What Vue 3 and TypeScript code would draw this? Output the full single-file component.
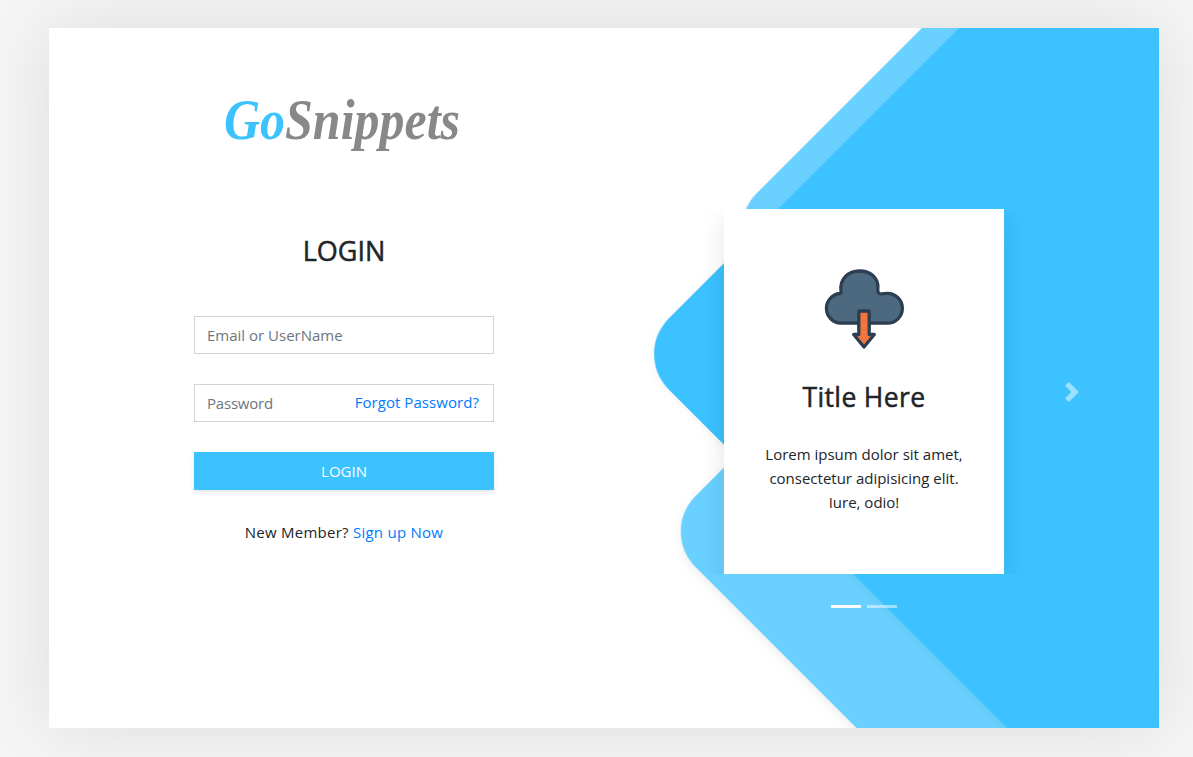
<script setup lang="ts">
import { ref } from 'vue'

const email = ref('')
const password = ref('')
const activeSlide = ref(0)
const slides = [0, 1]
</script>

<template>
  <main class="page">
    <section class="panel">
      <svg class="shapes" viewBox="0 0 1110 700" aria-hidden="true">
        <g class="shape light" transform="translate(672 201) rotate(-45)">
          <rect width="700" height="700" rx="50" />
        </g>
        <g class="shape light" transform="translate(611 503.5) rotate(-45)">
          <rect width="700" height="700" rx="50" />
        </g>
        <g class="shape dark" transform="translate(584.3 326) rotate(-45)">
          <rect width="900" height="900" rx="50" />
        </g>
      </svg>

      <div class="login">
        <svg class="logo" width="250" height="70" viewBox="0 0 250 70" role="img" aria-label="GoSnippets">
          <text x="4" y="49" textLength="236" lengthAdjust="spacingAndGlyphs"><tspan class="go">Go</tspan><tspan class="snippets">Snippets</tspan></text>
        </svg>
        <h3 class="heading">LOGIN</h3>
        <form class="form" @submit.prevent>
          <input v-model="email" class="field" type="text" placeholder="Email or UserName" />
          <div class="password">
            <input v-model="password" class="field" type="password" placeholder="Password" />
            <a class="link forgot">Forgot Password?</a>
          </div>
          <button class="submit" type="submit">LOGIN</button>
        </form>
        <p class="signup">New Member? <a class="link">Sign up Now</a></p>
      </div>

      <div class="carousel">
        <div class="clip">
          <article class="card">
            <svg class="cloud" width="80" height="80" viewBox="0 0 80 80" aria-hidden="true">
              <path d="M16.6 54.2A14.9 14.9 0 0 1 15.8 24.5Q17.3 24.4 17 22.5C13.5 -4.5 56.8 -4.5 53.8 20.5Q53.6 25.4 57.5 24.9Q60 24.3 63.4 24.3A14.95 14.95 0 0 1 63.4 54.2Z" fill="#4c6980" stroke="#2c3e50" stroke-width="3.3" stroke-linejoin="round" />
              <path d="M34.8 42H45.2V65.5H50.3L40 78L29.7 65.5H34.8Z" fill="#f1753c" stroke="#2c3e50" stroke-width="3.3" stroke-linejoin="round" />
            </svg>
            <h3 class="title">Title Here</h3>
            <p class="copy">Lorem ipsum dolor sit amet,<br />consectetur adipisicing elit.<br />Iure, odio!</p>
          </article>
        </div>
        <div class="indicators">
          <span v-for="i in slides" :key="i" class="bar" :class="{ active: i === activeSlide }" @click="activeSlide = i"></span>
        </div>
      </div>

      <button class="next" type="button" aria-label="Next">
        <svg width="20" height="20" viewBox="0 0 8 8"><path fill="#fff" d="M2.75 0l-1.5 1.5L3.75 4l-2.5 2.5L2.75 8l4-4-4-4z" /></svg>
      </button>
    </section>
  </main>
</template>

<style>
body {
  margin: 0;
  background: #f5f5f5;
  overflow: hidden;
}
</style>

<style scoped>
* { box-sizing: border-box; }
.page {
  height: 757px;
  padding: 28px 34px 29px 49px;
  background: #f5f5f5;
  font: 15px/24px "Segoe UI", "Open Sans", "Noto Sans", sans-serif;
  color: #212529;
}
.panel {
  position: relative;
  display: flex;
  width: 1110px;
  height: 700px;
  background: #fff;
  box-shadow: 0 0 70px rgba(0, 0, 0, 0.1);
}
.shapes {
  position: absolute;
  inset: 0;
  width: 1110px;
  height: 700px;
  overflow: hidden;
}
.shape { filter: drop-shadow(-3px 3px 5px rgba(0, 0, 0, 0.065)); }
.light { fill: #69d0ff; }
.dark { fill: #3bc2ff; }
.dark.shape { filter: drop-shadow(-2px 2px 5px rgba(0, 0, 0, 0.04)); }
.login {
  position: relative;
  width: 300px;
  margin-left: 145px;
  padding-top: 62px;
}
.logo {
  display: block;
  margin-left: 26px;
  overflow: visible;
}
.logo text {
  font: italic 700 56px "Brush Script MT", "Liberation Serif", serif;
}
.go { fill: #3bc2ff; }
.snippets { fill: #888; }
.heading {
  margin: 74px 0 0;
  font-size: 27px;
  line-height: 34px;
  font-weight: 500;
  text-align: center;
  -webkit-text-stroke: 0.5px currentColor;
}
.form {
  display: flex;
  flex-direction: column;
  gap: 30px;
  margin-top: 48px;
}
.field {
  display: block;
  width: 100%;
  height: 38px;
  padding: 6px 12px;
  border: 1px solid #ced4da;
  border-radius: 0;
  outline: none;
  background: #fff;
  font: inherit;
}
.field::placeholder {
  color: #6c757d;
  opacity: 1;
}
.password { position: relative; }
.password .field::placeholder { letter-spacing: -0.2px; }
.link { color: #007bff; }
.forgot {
  position: absolute;
  top: 6px;
  right: 15px;
  letter-spacing: 0.06px;
}
.submit {
  height: 38px;
  padding: 0;
  border: 0;
  background: #3bc2ff;
  box-shadow: 0 2px 4px rgba(0, 0, 0, 0.1);
  color: #fff;
  font: inherit;
}
.signup {
  margin: 30px 0 0;
  text-align: center;
  letter-spacing: 0.25px;
}
.carousel {
  position: relative;
  width: 350px;
  margin-left: 195px;
  padding-top: 181px;
}
.clip {
  display: flex;
  justify-content: center;
  overflow: hidden;
}
.card {
  width: 280px;
  height: 365px;
  padding-top: 60px;
  background: #fff;
  box-shadow: 0 8px 24px rgba(0, 0, 0, 0.1);
  text-align: center;
}
.cloud {
  display: block;
  margin: 0 auto;
}
.title {
  margin: 31px 0 0;
  font-size: 26.5px;
  line-height: 34px;
  font-weight: 500;
  letter-spacing: 0.35px;
  -webkit-text-stroke: 0.5px currentColor;
}
.copy { margin: 28px 0 0; }
.indicators {
  display: flex;
  justify-content: center;
  gap: 6px;
  margin-top: 31px;
}
.bar {
  width: 30px;
  height: 3px;
  background: #fff;
  opacity: 0.5;
}
.active { opacity: 1; }
.next {
  position: relative;
  align-self: flex-start;
  width: 20px;
  height: 20px;
  margin: 354px 0 0 23px;
  padding: 0;
  border: 0;
  background: none;
  opacity: 0.5;
}
.next svg { display: block; }
</style>
